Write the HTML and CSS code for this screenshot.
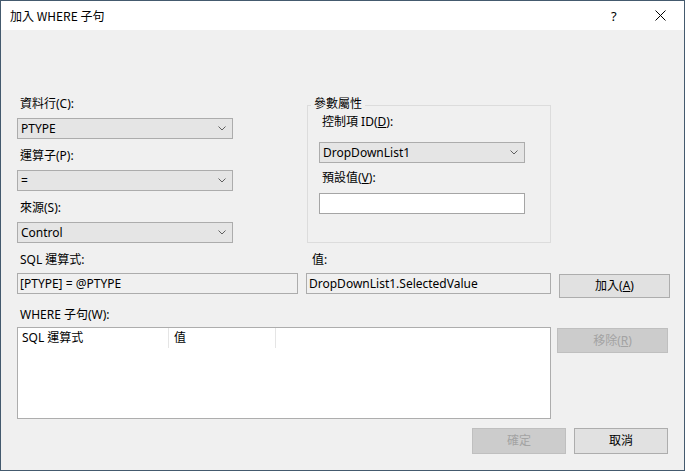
FILE: index.html
```html
<!DOCTYPE html>
<html lang="zh-Hant">
<head>
<meta charset="utf-8">
<title>加入 WHERE 子句</title>
<link rel="stylesheet" href="styles.css">
</head>
<body>
<div class="window">
  <div class="titlebar">
    <span class="title">加入 WHERE 子句</span>
    <span class="help">?</span>
    <span class="close"><svg width="11" height="11" viewBox="0 0 11 11"><path d="M0.5 0.5L10.5 10.5M10.5 0.5L0.5 10.5" stroke="#000" stroke-width="1" fill="none"/></svg></span>
  </div>
  <div class="content">
    <div class="top">
      <div class="leftcol">
        <div class="lbl first">資料行(C):</div>
        <div class="combo"><span>PTYPE</span><svg class="chev" width="8" height="5" viewBox="0 0 8 5"><path d="M0.5 0.5L4 4L7.5 0.5" stroke="#606060" fill="none"/></svg></div>
        <div class="lbl">運算子(P):</div>
        <div class="combo"><span>=</span><svg class="chev" width="8" height="5" viewBox="0 0 8 5"><path d="M0.5 0.5L4 4L7.5 0.5" stroke="#606060" fill="none"/></svg></div>
        <div class="lbl">來源(S):</div>
        <div class="combo"><span>Control</span><svg class="chev" width="8" height="5" viewBox="0 0 8 5"><path d="M0.5 0.5L4 4L7.5 0.5" stroke="#606060" fill="none"/></svg></div>
      </div>
      <div class="group">
        <span class="legend">參數屬性</span>
        <div class="glbl first">控制項 ID(<u>D</u>):</div>
        <div class="combo gcombo"><span>DropDownList1</span><svg class="chev" width="8" height="5" viewBox="0 0 8 5"><path d="M0.5 0.5L4 4L7.5 0.5" stroke="#606060" fill="none"/></svg></div>
        <div class="glbl">預設值(<u>V</u>):</div>
        <div class="textbox white gcombo"></div>
      </div>
    </div>
    <div class="expr">
      <div class="lbl2">SQL 運算式:</div>
      <div class="lbl2 val">值:</div>
      <div></div>
      <div class="textbox ro">[PTYPE] = @PTYPE</div>
      <div class="textbox ro">DropDownList1.SelectedValue</div>
      <button class="btn add">加入(<u>A</u>)</button>
    </div>
    <div class="lbl3">WHERE 子句(W):</div>
    <div class="where">
      <div class="list">
        <div class="lhead">
          <div class="col c1">SQL 運算式</div>
          <div class="col c2">值</div>
        </div>
      </div>
      <button class="btn dis remove">移除(<u>R</u>)</button>
    </div>
    <div class="footer">
      <button class="btn dis big">確定</button>
      <button class="btn big">取消</button>
    </div>
  </div>
</div>
</body>
</html>
```
FILE: styles.css
```css
* { box-sizing: border-box; }
html, body { margin: 0; padding: 0; }
body {
  width: 685px;
  height: 471px;
  overflow: hidden;
  font-family: "Noto Sans", "Noto Sans CJK TC", sans-serif;
  font-size: 12px;
  color: #000;
}
.window {
  width: 685px;
  height: 471px;
  border: 1px solid #445a6e;
  display: flex;
  flex-direction: column;
  background: #f0f0f0;
}
.titlebar {
  height: 29px;
  background: #fff;
  display: flex;
  align-items: center;
  flex: none;
}
.title {
  font-family: "Noto Sans CJK TC", sans-serif;
  font-size: 12px;
  padding-left: 9px;
  flex: 1;
  line-height: 14px;
}
.help {
  font-family: "Noto Sans", sans-serif;
  font-size: 13px;
  width: 46px;
  text-align: left;
  padding-left: 19px;
}
.close {
  width: 46px;
  display: flex;
  align-items: center;
  padding-left: 17px;
  height: 29px;
}
.content {
  flex: 1;
  padding: 0 16px 0 16px;
  display: flex;
  flex-direction: column;
}
.top {
  display: flex;
  margin-top: 67px;
}
.leftcol {
  width: 216px;
  display: flex;
  flex-direction: column;
}
.lbl, .glbl, .lbl2, .lbl3 {
  height: 14px;
  line-height: 14px;
  padding-left: 3px;
  white-space: nowrap;
}
.lbl { margin-top: 10px; margin-bottom: 7px; }
.lbl.first { margin-top: 0; }
.combo {
  height: 21px;
  background: #e5e5e5;
  border: 1px solid #acacac;
  display: flex;
  align-items: center;
  justify-content: space-between;
  padding: 0 6px 0 3px;
  line-height: 19px;
}
.chev { flex: none; }
.group {
  position: relative;
  margin-left: 74px;
  margin-top: 8px;
  width: 244px;
  height: 138px;
  border: 1px solid #dcdcdc;
  padding-left: 11px;
  display: flex;
  flex-direction: column;
}
.legend {
  position: absolute;
  top: -10px;
  left: 3px;
  padding: 0 3px;
  background: #f0f0f0;
  line-height: 14px;
  font-family: "Noto Sans CJK TC", sans-serif;
}
.glbl { margin-top: 8px; }
.glbl.first { margin-top: 9px; }
.gcombo { width: 206px; margin-top: 13px; flex: none; }
.textbox.gcombo { margin-top: 8px; }
.textbox {
  height: 21px;
  border: 1px solid #acacac;
  padding-left: 2px;
  line-height: 19px;
  white-space: nowrap;
}
.textbox.white { background: #fff; border-color: #a5a5a5; }
.textbox.ro { background: #f0f0f0; }
.expr {
  display: grid;
  grid-template-columns: 281px 245px 111px;
  column-gap: 8px;
  row-gap: 6px;
  margin-top: 10px;
  align-items: start;
}
.expr .val { padding-left: 6px; }
.btn {
  font-family: "Noto Sans", "Noto Sans CJK TC", sans-serif;
  font-size: 12px;
  color: #000;
  background: #e1e1e1;
  border: 1px solid #adadad;
  padding: 0;
  margin: 0;
  line-height: 14px;
}
.btn.dis {
  background: #cccccc;
  border-color: #bfbfbf;
  color: #a3a3a3;
}
.add { height: 24px; margin-top: 1px; width: 111px; }
.lbl3 { margin-top: 10px; }
.where {
  display: flex;
  margin-top: 5px;
  gap: 6px;
  align-items: flex-start;
}
.list {
  width: 534px;
  height: 92px;
  background: #fff;
  border: 1px solid #adadad;
}
.lhead {
  display: flex;
  height: 20px;
}
.col {
  height: 20px;
  line-height: 20px;
  padding-left: 4px;
  border-right: 1px solid #e5e5e5;
  white-space: nowrap;
}
.c1 { width: 151px; }
.c2 { width: 107px; padding-left: 5px; }
.remove { width: 111px; height: 25px; margin-top: 1px; }
.footer {
  display: flex;
  justify-content: flex-end;
  gap: 8px;
  margin-top: 9px;
  padding-right: 0;
}
.big { width: 94px; height: 26px; }
u { text-decoration: underline; text-underline-offset: 1px; }
```
